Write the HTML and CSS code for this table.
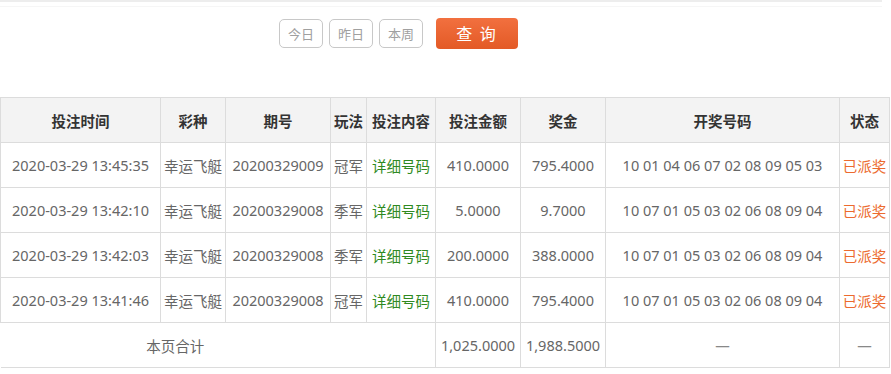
FILE: index.html
```html
<!DOCTYPE html>
<html lang="zh-CN">
<head>
<meta charset="utf-8">
<link rel="stylesheet" href="styles.css">
</head>
<body>
<div class="topline"></div>
<div class="toolbar">
  <button class="quick">今日</button>
  <button class="quick">昨日</button>
  <button class="quick">本周</button>
  <button class="search">查 询</button>
</div>
<table class="grid">
  <colgroup>
    <col style="width:160px"><col style="width:65px"><col style="width:105px"><col style="width:36px"><col style="width:69px"><col style="width:85px"><col style="width:85px"><col style="width:234px"><col style="width:50px">
  </colgroup>
  <thead>
    <tr><th>投注时间</th><th>彩种</th><th>期号</th><th>玩法</th><th>投注内容</th><th>投注金额</th><th>奖金</th><th>开奖号码</th><th>状态</th></tr>
  </thead>
  <tbody>
    <tr><td>2020-03-29 13:45:35</td><td>幸运飞艇</td><td>20200329009</td><td>冠军</td><td class="link">详细号码</td><td>410.0000</td><td>795.4000</td><td>10 01 04 06 07 02 08 09 05 03</td><td class="paid">已派奖</td></tr>
    <tr><td>2020-03-29 13:42:10</td><td>幸运飞艇</td><td>20200329008</td><td>季军</td><td class="link">详细号码</td><td>5.0000</td><td>9.7000</td><td>10 07 01 05 03 02 06 08 09 04</td><td class="paid">已派奖</td></tr>
    <tr><td>2020-03-29 13:42:03</td><td>幸运飞艇</td><td>20200329008</td><td>季军</td><td class="link">详细号码</td><td>200.0000</td><td>388.0000</td><td>10 07 01 05 03 02 06 08 09 04</td><td class="paid">已派奖</td></tr>
    <tr><td>2020-03-29 13:41:46</td><td>幸运飞艇</td><td>20200329008</td><td>冠军</td><td class="link">详细号码</td><td>410.0000</td><td>795.4000</td><td>10 07 01 05 03 02 06 08 09 04</td><td class="paid">已派奖</td></tr>
  </tbody>
  <tfoot>
    <tr><td colspan="5" class="sumlabel">本页合计</td><td>1,025.0000</td><td>1,988.5000</td><td class="dash">—</td><td class="dash">—</td></tr>
  </tfoot>
</table>
</body>
</html>
```

FILE: styles.css
```css
* { box-sizing: border-box; }
body {
  margin: 0;
  background: #fff;
  font-family: "Noto Sans", "Noto Sans CJK SC", sans-serif;
  color: #666;
}
.topline {
  height: 7px;
  width: 882px;
  border-top: 2px solid #ededed;
  border-bottom: 1px solid #f6f6f6;
}
.toolbar {
  display: flex;
  align-items: center;
  gap: 6px;
  padding-left: 279px;
  margin-top: 10px;
  height: 32px;
}
.quick {
  width: 44px;
  height: 29px;
  border: 1px solid #c8c8c8;
  border-radius: 5px;
  background: #fff;
  color: #a0a0a0;
  font-family: "Noto Sans CJK SC", sans-serif;
  font-size: 13px;
  padding: 0;
}
.search {
  margin-left: 7px;
  width: 82px;
  height: 31px;
  border: none;
  border-radius: 4px;
  background: linear-gradient(#f2703f, #e35a26);
  color: #fff;
  font-family: "Noto Sans CJK SC", sans-serif;
  font-size: 16px;
  padding: 0;
  letter-spacing: 2px;
}
.grid {
  margin-top: 48px;
  width: 889px;
  border-collapse: collapse;
  table-layout: fixed;
  font-size: 14.5px;
}
.grid th, .grid td {
  border: 1px solid #dcdcdc;
  height: 45px;
  text-align: center;
  padding: 0;
  white-space: nowrap;
}
.grid th {
  background: #f3f3f3;
  color: #333;
  font-weight: bold;
}
.grid td { color: #666; }
.grid td.link { color: #2f8a21; }
.grid td.paid { color: #ec6a2e; }
.grid tfoot td { border-left: none; }
.grid tfoot td.sumlabel { border-right: 1px solid #dcdcdc; padding-right: 85px; }
.grid tfoot td.dash { color: #888; }
```
